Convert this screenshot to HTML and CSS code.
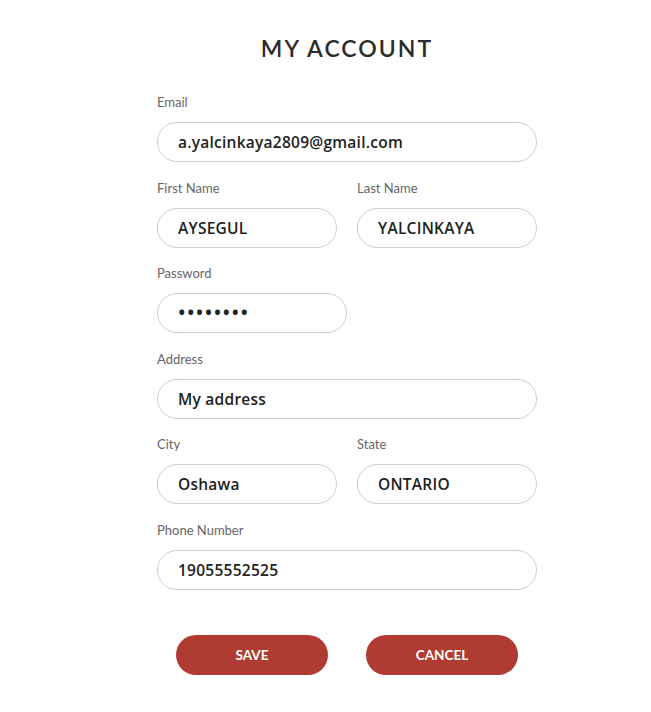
FILE: index.html
```html
<!DOCTYPE html>
<html lang="en">
<head>
<meta charset="utf-8">
<title>My Account</title>
<link rel="stylesheet" href="styles.css">
</head>
<body>
<main class="account">
  <h1 class="title">MY ACCOUNT</h1>
  <form class="form">
    <div class="field">
      <label class="label">Email</label>
      <input class="input" type="text" value="a.yalcinkaya2809@gmail.com" readonly>
    </div>
    <div class="row">
      <div class="field">
        <label class="label">First Name</label>
        <input class="input" type="text" value="AYSEGUL" readonly>
      </div>
      <div class="field">
        <label class="label">Last Name</label>
        <input class="input" type="text" value="YALCINKAYA" readonly>
      </div>
    </div>
    <div class="field">
      <label class="label">Password</label>
      <div class="input input-pass">••••••••</div>
    </div>
    <div class="field">
      <label class="label">Address</label>
      <input class="input" type="text" value="My address" readonly>
    </div>
    <div class="row">
      <div class="field">
        <label class="label">City</label>
        <input class="input" type="text" value="Oshawa" readonly>
      </div>
      <div class="field">
        <label class="label">State</label>
        <input class="input" type="text" value="ONTARIO" readonly>
      </div>
    </div>
    <div class="field">
      <label class="label">Phone Number</label>
      <input class="input" type="text" value="19055552525" readonly>
    </div>
    <div class="actions">
      <button type="button" class="btn">SAVE</button>
      <button type="button" class="btn">CANCEL</button>
    </div>
  </form>
</main>
</body>
</html>
```
FILE: styles.css
```css
* { box-sizing: border-box; }
body {
  margin: 0;
  background: #fff;
  font-family: "Lato", "Open Sans", sans-serif;
  color: #222;
}
.account {
  width: 380px;
  margin-left: 157px;
  padding-top: 34px;
}
.title {
  margin: 0 0 32px;
  text-align: center;
  font-size: 23px;
  font-weight: 600;
  letter-spacing: 2px;
  line-height: 28px;
  color: #2b2b2b;
}
.form {
  display: flex;
  flex-direction: column;
  gap: 17.6px;
}
.field {
  display: flex;
  flex-direction: column;
}
.label {
  font-size: 13px;
  line-height: 16px;
  color: #666;
  margin-bottom: 12px;
}
.input {
  height: 40px;
  width: 100%;
  border: 1px solid #cfcfcf;
  border-radius: 20px;
  padding: 0 20px;
  font-family: "Open Sans", "Lato", sans-serif;
  font-size: 15.5px;
  font-weight: 600;
  letter-spacing: 0.25px;
  color: #222;
  background: #fff;
  outline: none;
}
.input-pass {
  width: 190px;
  display: flex;
  align-items: center;
  letter-spacing: 1.4px;
  font-size: 20px;
  line-height: 1;
}
.row {
  display: grid;
  grid-template-columns: 1fr 1fr;
  gap: 20px;
}
.actions {
  display: flex;
  justify-content: center;
  gap: 38px;
  margin-top: 27px;
}
.btn {
  width: 152px;
  height: 40px;
  border: none;
  border-radius: 20px;
  background: #b03b32;
  color: #fff;
  font-family: "Lato", "Open Sans", sans-serif;
  font-size: 13.5px;
  font-weight: 700;
  cursor: pointer;
}
```
